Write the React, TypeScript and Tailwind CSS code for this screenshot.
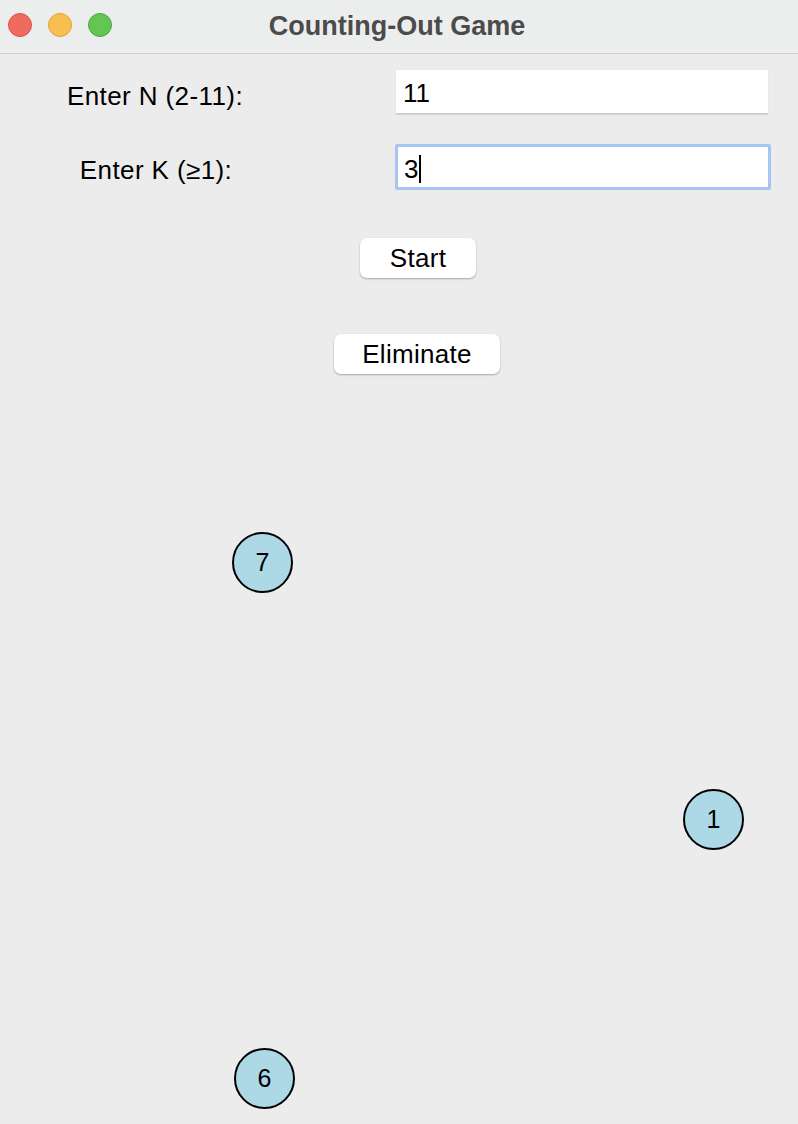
import React from "react";

const font = { fontFamily: '"Liberation Sans", Arial, sans-serif' };

type Node = { n: number; x: number; y: number };

// circle centres measured in page coords
const nodes: Node[] = [
  { n: 7, x: 262, y: 562 },
  { n: 1, x: 713, y: 819 },
  { n: 6, x: 264, y: 1078 },
];

function TitleBar() {
  return (
    <div className="relative flex h-[54px] items-center border-b border-[#cfcfcf] bg-[#eceeee]">
      <div className="absolute left-[8px] top-[13px] flex gap-[16px]">
        <span className="h-[24px] w-[24px] rounded-full border border-[#d9564b] bg-[#ef6b5f]" />
        <span className="h-[24px] w-[24px] rounded-full border border-[#dea33a] bg-[#f6bf4f]" />
        <span className="h-[24px] w-[24px] rounded-full border border-[#50a643] bg-[#62c554]" />
      </div>
      <div className="w-full pr-[4px] text-center text-[27px] font-bold text-[#4b4b4b]">Counting-Out Game</div>
    </div>
  );
}

export default function App() {
  return (
    <div style={font} className="relative h-[1124px] w-[798px] overflow-hidden bg-[#ececec] text-black">
      <TitleBar />

      <div className="mt-[16px] flex h-[44px] items-center">
        <div className="flex w-[310px] justify-center pt-[8px] text-[26px] tracking-[0.4px]">Enter N (2-11):</div>
        <div className="ml-[86px] flex h-[44px] w-[372px] items-center border-b border-[#c8c8c8] bg-white pl-[7px] pt-[4px] text-[26px] shadow-[0_1px_1px_rgba(0,0,0,0.08)]">
          11
        </div>
      </div>

      <div className="mt-[30px] flex h-[46px] items-center">
        <div className="flex w-[312px] justify-center pt-[6px] text-[26px] tracking-[0.4px]">Enter K (≥1):</div>
        <div className="ml-[83px] flex h-[46px] w-[376px] items-center rounded-[2px] border-[3px] border-[#a6c5f2] bg-white pl-[6px] pt-[4px] text-[26px]">
          3<span className="ml-[1px] inline-block h-[28px] w-[2px] bg-black" />
        </div>
      </div>

      <div className="flex justify-center pl-[38px] pt-[48px]">
        <button className="h-[40px] w-[116px] rounded-[7px] bg-white text-[26px] tracking-[0.3px] shadow-[0_1px_2px_rgba(0,0,0,0.3)]">
          Start
        </button>
      </div>

      <div className="flex justify-center pl-[36px] pt-[56px]">
        <button className="h-[40px] w-[166px] rounded-[7px] bg-white text-[26px] tracking-[0.3px] shadow-[0_1px_2px_rgba(0,0,0,0.3)]">
          Eliminate
        </button>
      </div>

      {nodes.map((p) => (
        <div
          key={p.n}
          className="absolute flex h-[61px] w-[61px] items-center justify-center rounded-full border-2 border-black bg-[#add8e6] text-[25px]"
          style={{ left: p.x - 30, top: p.y - 30 }}
        >
          {p.n}
        </div>
      ))}
    </div>
  );
}
